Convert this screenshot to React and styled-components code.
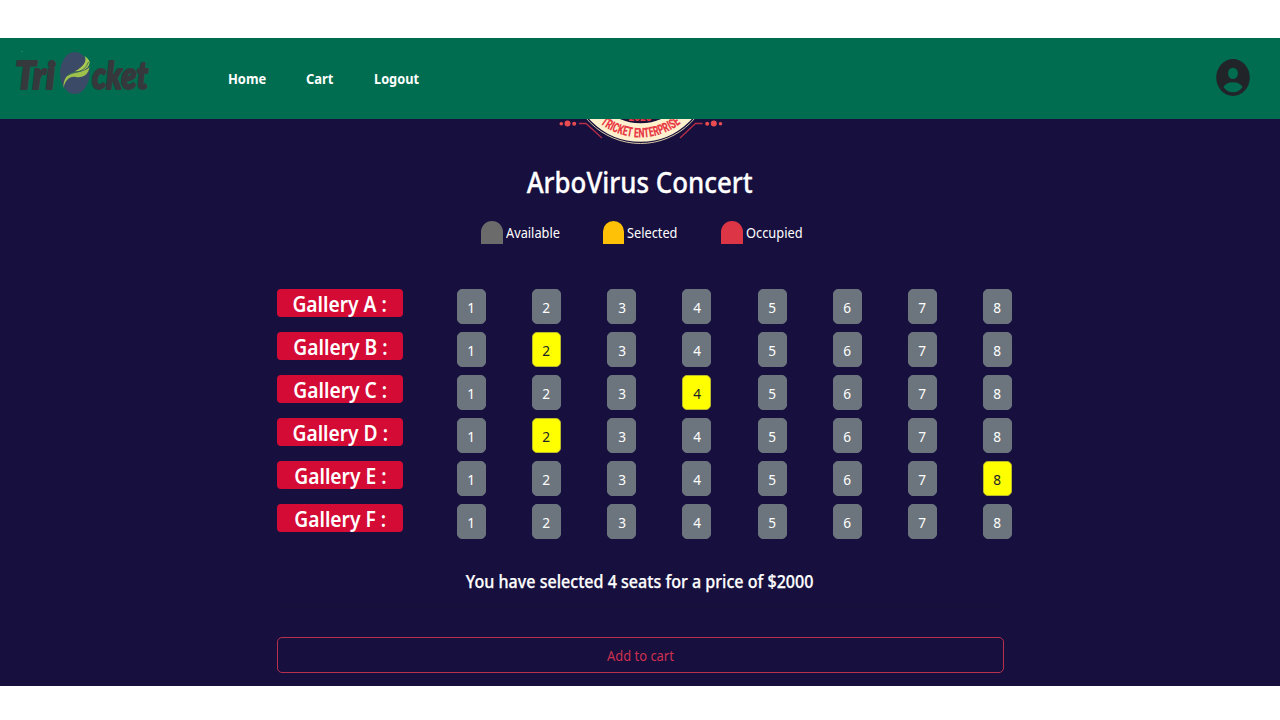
import React from 'react';
import styled, { createGlobalStyle } from 'styled-components';

const Global = createGlobalStyle`
  * { box-sizing: border-box; }
  body { margin: 0; background: #fff; font-family: "Noto Sans", "Open Sans", sans-serif; color: #fff; }
`;

const Page = styled.div`
  height: 720px;
  padding: 38px 0 34px;
  display: flex;
  flex-direction: column;
`;

const Navbar = styled.header`
  height: 81px;
  flex: none;
  display: flex;
  align-items: center;
  padding: 0 30px 0 6px;
  background: #006c50;
`;

const Logo = styled.svg`
  width: 152px;
  height: 60px;
  margin-bottom: 11px;
  overflow: visible;
`;

const LogoText = styled.text`
  font-family: Lato, sans-serif;
  font-size: ${p => p.$size}px;
  font-weight: 900;
  font-style: italic;
  fill: #36393b;
  stroke: #36393b;
  stroke-width: 2px;
  stroke-linejoin: round;
`;

const Nav = styled.nav`
  display: flex;
  gap: 40px;
  margin: 0 0 2px 70px;
  flex: 1;
`;

const NavLink = styled.a`
  font-size: 14.5px;
  font-weight: 700;
  line-height: 20px;
  width: ${p => p.$w}px;
  white-space: nowrap;
`;

const Fit = styled.span`
  display: inline-block;
  white-space: nowrap;
  transform: scaleX(${p => p.$s || 1});
  transform-origin: ${p => p.$o || 'left'} center;
`;

const UserIcon = styled.svg`
  width: 34px;
  height: 37px;
  margin-bottom: 2px;
`;

const Main = styled.main`
  flex: 1;
  display: flex;
  flex-direction: column;
  align-items: center;
  background: #170f3e;
  overflow: hidden;
`;

const Emblem = styled.svg`
  width: 180px;
  height: 30px;
  flex: none;
`;

const EmblemText = styled.text`
  font-family: Roboto, sans-serif;
  font-weight: 900;
  fill: #e83c47;
`;

const Title = styled.h1`
  margin: 13px 0 0;
  font-size: 29px;
  font-weight: 500;
  line-height: 40px;
  -webkit-text-stroke: 0.3px #fff;
`;

const Legend = styled.div`
  display: flex;
  width: 322px;
  height: 23px;
  margin: 19px 0 0 4px;
`;

const LegendItem = styled.div`
  display: flex;
  width: ${p => p.$w}px;
  gap: 3px;
  font-size: 14.5px;
  line-height: 22px;
  white-space: nowrap;
`;

const Swatch = styled.span`
  width: 21.5px;
  height: 23px;
  flex: none;
  border-radius: 11px 11px 0 0;
  background: ${p => p.$c};
`;

const Booking = styled.section`
  width: 726px;
  margin-top: 45px;
`;

const Row = styled.div`
  display: flex;
  height: 43px;
`;

const Gallery = styled.div`
  width: 126px;
  height: 28px;
  margin-right: 54px;
  flex: none;
  border-radius: 4px;
  background: #d30b35;
  font-size: 21px;
  font-weight: 600;
  line-height: 31px;
  text-align: center;
`;

const Seats = styled.div`
  display: flex;
  gap: 46.15px;
`;

const Seat = styled.button`
  width: 29px;
  height: 35px;
  flex: none;
  padding: 1px 0 0;
  border: 1px solid ${p => (p.$on ? '#b9b92a' : '#6c757d')};
  border-radius: 5px;
  background: ${p => (p.$on ? '#ff0' : '#6c757d')};
  color: ${p => (p.$on ? '#212529' : '#fff')};
  font: 14.5px/20px "Noto Sans", sans-serif;
`;

const Summary = styled.p`
  margin: 21px 0 0;
  font-size: 18px;
  font-weight: 500;
  line-height: 26px;
  text-align: center;
  -webkit-text-stroke: 0.25px #fff;
`;

const Divider = styled.hr`
  margin: 11px 0 31px;
  border: 0;
  border-top: 1px solid #191238;
`;

const AddButton = styled.button`
  display: block;
  width: 727px;
  height: 36px;
  padding: 0;
  border: 1px solid #b8304d;
  border-radius: 5px;
  background: transparent;
  color: #cc3150;
  font: 14.5px/20px "Noto Sans", sans-serif;
`;

const galleries = [['A', 0], ['B', 2], ['C', 4], ['D', 2], ['E', 8], ['F', 0]];

export default function App() {
  return (
    <>
      <Global />
      <Page>
        <Navbar>
          <Logo viewBox="6 43 152 60">
            <LogoText $size={38} x="15" y="88.5" textLength="40" lengthAdjust="spacingAndGlyphs">Tri</LogoText>
            <LogoText $size={38} x="92" y="88.5" textLength="56" lengthAdjust="spacingAndGlyphs">cket</LogoText>
            <ellipse cx="74.8" cy="73" rx="14.8" ry="21" fill="#3b4a66" />
            <path d="M63.5 88 C63 79 67 73.5 75 72.5 C83 72 88 69 89.5 67 C88.5 75 83 78 76 77 C69 76 65.5 80 63.5 88Z" fill="#9dc14b" />
            <path d="M84.5 56 C87 60 85 66 74.5 71.5 C85 71.5 89.5 67.5 89.7 62 C89 59.5 87 57.5 84.5 56Z" fill="#a9c950" />
            <path d="M67.5 75.5 C75 70.5 84 74 88.5 62" fill="none" stroke="#31665a" strokeWidth=".9" />
            <circle cx="22" cy="51.5" r=".6" fill="#58a184" />
          </Logo>
          <Nav>
            <NavLink $w={38}><Fit $s={0.89}>Home</Fit></NavLink>
            <NavLink $w={28}><Fit $s={0.89}>Cart</Fit></NavLink>
            <NavLink $w={46}><Fit $s={0.88}>Logout</Fit></NavLink>
          </Nav>
          <UserIcon viewBox="0 0 34 37">
            <ellipse cx="17" cy="18.5" rx="16.8" ry="18.5" fill="#212529" />
            <ellipse cx="17" cy="14.4" rx="4.9" ry="5.7" fill="#006c50" />
            <path d="M7.5 28 Q10 23.2 17 23.2 Q24 23.2 26.5 28 Q23 33.3 17 33.3 Q11 33.3 7.5 28Z" fill="#006c50" />
          </UserIcon>
        </Navbar>
        <Main>
          <Emblem viewBox="550 119 180 30">
            <circle cx="640.5" cy="72.5" r="71" fill="none" stroke="#d9c9a3" strokeWidth="1" />
            <circle cx="640.5" cy="72.5" r="60" fill="none" stroke="#fff0ce" strokeWidth="18.5" />
            <circle cx="640.5" cy="72.5" r="50" fill="#201231" />
            <path id="ring" d="M575.5 72.5 A65 65 0 0 0 705.5 72.5" fill="none" />
            <EmblemText fontSize="13.5" textAnchor="middle">
              <textPath href="#ring" startOffset="50%" textLength="87" lengthAdjust="spacingAndGlyphs">TRICKET ENTERPRISE</textPath>
            </EmblemText>
            <EmblemText fontSize="10" x="640" y="120.7" textAnchor="middle">2020</EmblemText>
            <g fill="none" stroke="#b62e48" strokeWidth="1.3">
              <path d="M579 123.5 H586 L602 138" />
              <path d="M702.5 123.5 H695.5 L680 138" />
            </g>
            <g fill="#e94c50">
              <circle cx="561.3" cy="123.7" r="1.8" />
              <circle cx="567.5" cy="123.5" r="3" />
              <circle cx="574.2" cy="123.7" r="2" />
              <circle cx="707.2" cy="123.7" r="2" />
              <circle cx="713.8" cy="123.5" r="3" />
              <circle cx="720.5" cy="123.7" r="1.8" />
            </g>
          </Emblem>
          <Title><Fit $o="center" $s={0.892}>ArboVirus Concert</Fit></Title>
          <Legend>
            <LegendItem $w={121.5}><Swatch $c="#6b6b6b" /><Fit $s={0.88}>Available</Fit></LegendItem>
            <LegendItem $w={118.5}><Swatch $c="#ffc107" /><Fit $s={0.88}>Selected</Fit></LegendItem>
            <LegendItem $w={82}><Swatch $c="#dc3545" /><Fit $s={0.885}>Occupied</Fit></LegendItem>
          </Legend>
          <Booking>
            {galleries.map(([g, sel]) => (
              <Row key={g}>
                <Gallery><Fit $o="center" $s={0.915}>Gallery {g} :</Fit></Gallery>
                <Seats>
                  {[1, 2, 3, 4, 5, 6, 7, 8].map(n => (
                    <Seat key={n} $on={n === sel}><Fit $o="center" $s={0.94}>{n}</Fit></Seat>
                  ))}
                </Seats>
              </Row>
            ))}
            <Summary><Fit $o="center" $s={0.893}>You have selected 4 seats for a price of $2000</Fit></Summary>
            <Divider />
            <AddButton><Fit $o="center" $s={0.89}>Add to cart</Fit></AddButton>
          </Booking>
        </Main>
      </Page>
    </>
  );
}
